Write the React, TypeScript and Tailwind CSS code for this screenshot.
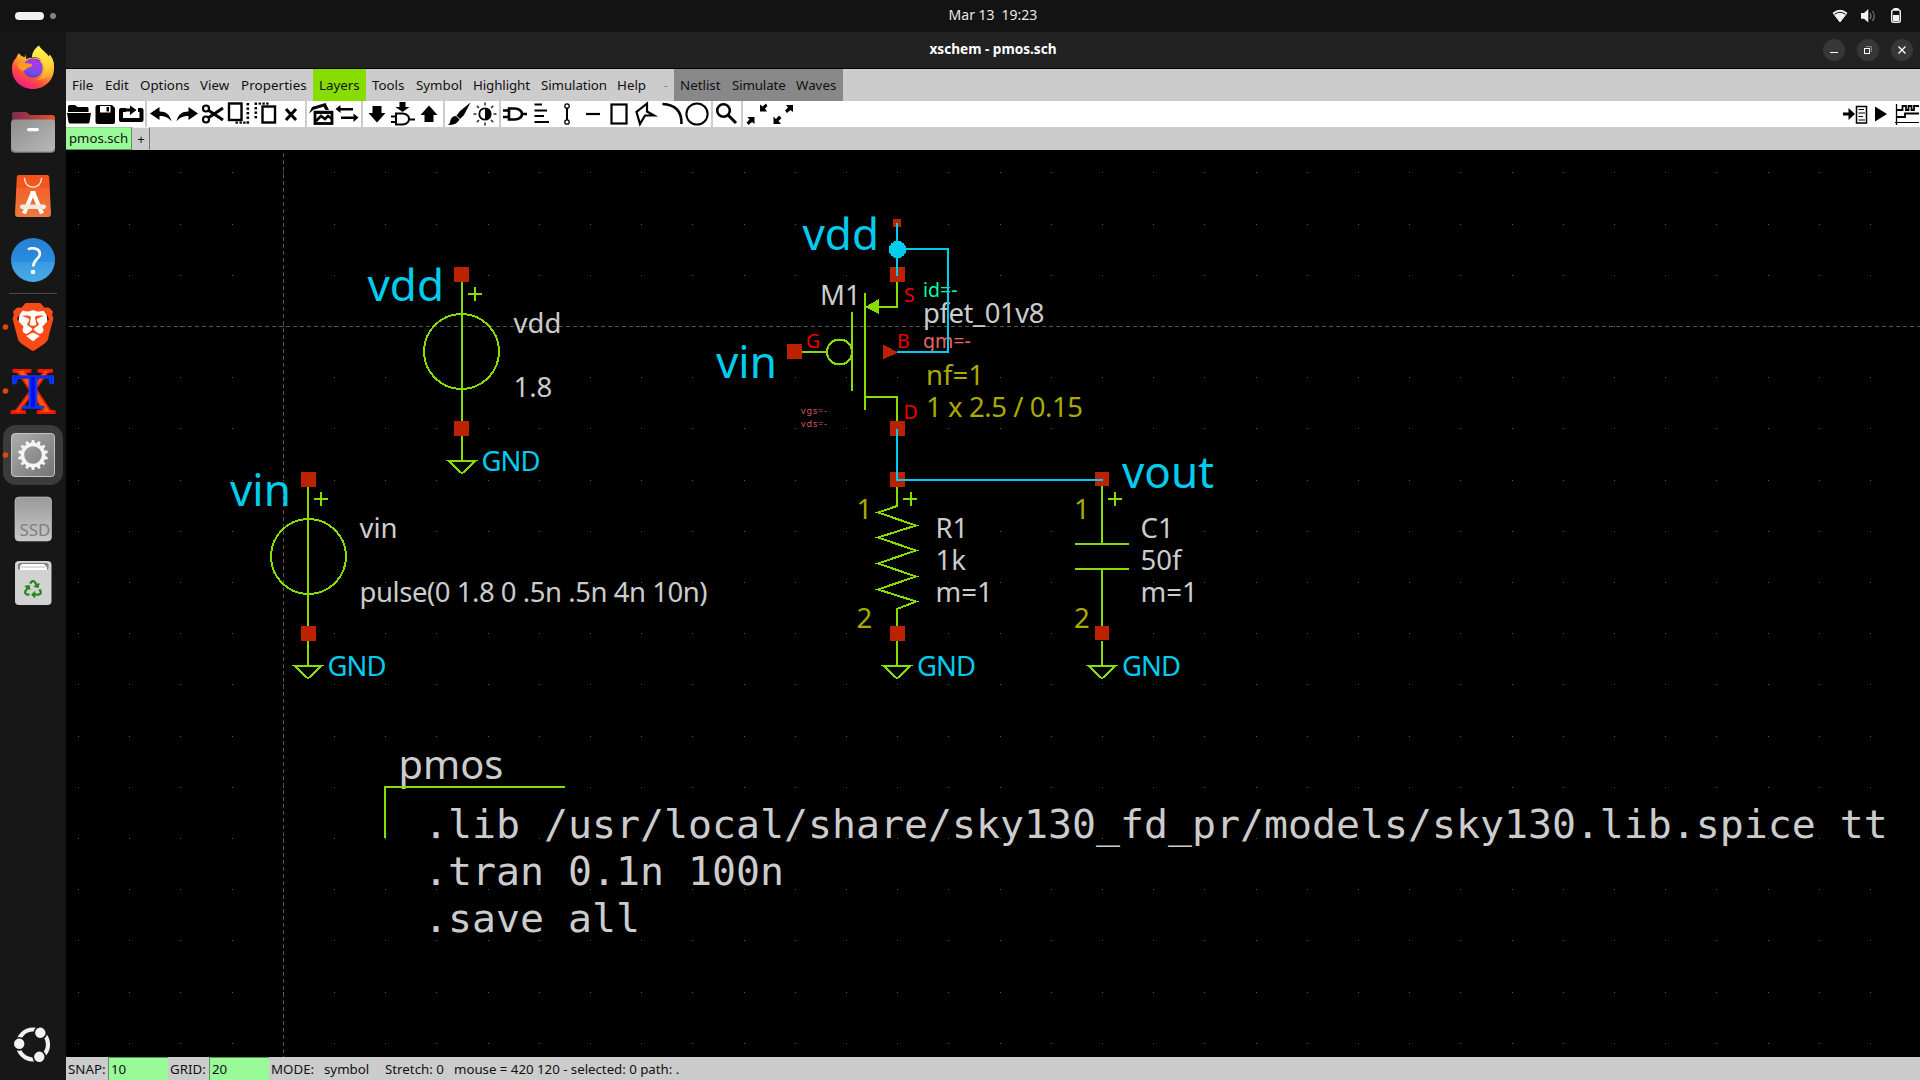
import React from "react";
import { SiBrave } from "react-icons/si";
import { FaRecycle } from "react-icons/fa";

const GREEN = "#88dd00";
const CYAN = "#00ccee";
const RED = "#bb2200";
const GREY = "#cccccc";
const OLIVE = "#aaaa00";

/* ---------- dock ---------- */

function DockIcon({ top, running, children }: { top: number; running?: boolean; children: React.ReactNode }) {
  return (
    <svg width="66" height="64" viewBox={`0 ${top} 66 64`} className="block shrink-0 overflow-visible">
      {children}
      {running && <circle cx="5.5" cy={top + 32} r="2.8" fill="#d9480f" />}
    </svg>
  );
}

function Gear() {
  const teeth = Array.from({ length: 14 }, (_, i) => (i * 360) / 14);
  return (
    <g>
      <circle cx="33" cy="455" r="10.6" fill="none" stroke="#f4f4f2" strokeWidth="3.6" />
      {teeth.map((a) => (
        <path key={a} d="M31 444.6 L31.8 440 H34.2 L35 444.6Z" fill="#f4f4f2" transform={`rotate(${a} 33 455)`} />
      ))}
    </g>
  );
}

function Dock() {
  return (
    <aside className="flex w-[66px] shrink-0 flex-col bg-[#171717] pt-[3px] pb-[3px]">
      <DockIcon top={35}>
        <defs>
          <linearGradient id="ffBody" x1="0.85" y1="0.05" x2="0.2" y2="1">
            <stop offset="0" stopColor="#fff44f" />
            <stop offset="0.35" stopColor="#ffb02a" />
            <stop offset="0.65" stopColor="#ff4f3d" />
            <stop offset="1" stopColor="#f0109a" />
          </linearGradient>
          <radialGradient id="ffCore" cx="0.6" cy="0.2" r="0.9">
            <stop offset="0" stopColor="#b833e1" />
            <stop offset="0.6" stopColor="#7a4be8" />
            <stop offset="1" stopColor="#4a3fc0" />
          </radialGradient>
          <linearGradient id="ffFlame" x1="0.5" y1="0" x2="0.7" y2="1">
            <stop offset="0" stopColor="#fff44f" />
            <stop offset="0.6" stopColor="#ffd43a" />
            <stop offset="1" stopColor="#ff9a28" />
          </linearGradient>
        </defs>
        <path d="M19 53 C20 55 22 57 25 57 L26 54 V59 C31 57 38 57 44 61 L50 55 C53 59 54 64 54 68 C54 80 45 89 33 89 C21 89 12 80 12 69 C12 63 14 60 16.500 57.500 C17 56 18 54 19 53Z" fill="url(#ffBody)" />
        <path d="M39 45.500 C34 49 32 53 32 57.500 C38 56 44 60 44.500 66 C45 73 42 78 37 80 C46 79 54 73 54 66 C54 61 52 57 49.500 54.500 L49.500 58 C48 53 42 51 39 45.500Z" fill="url(#ffFlame)" />
        <circle cx="33" cy="68" r="9.8" fill="url(#ffCore)" />
        <path d="M17.500 65 C20 62 23 62 26 63.500 C29 63 31.500 64 32.500 65 C31 68 27 67 26 69.500 C24 71 23 70 23 71.500 C21 70 18 68 17.500 65Z" fill="#ff9a22" />
        <path d="M34 58.500 C36 60 38 59 41 60.500 L38.500 61 L42 64 C39 61 36 61 34 58.500Z" fill="#7a2be0" />
      </DockIcon>
      <DockIcon top={99}>
        <defs>
          <linearGradient id="fTab" x1="0" x2="1">
            <stop offset="0" stopColor="#7a2a52" />
            <stop offset="1" stopColor="#e4552a" />
          </linearGradient>
          <linearGradient id="fFront" x1="0" y1="0" x2="1" y2="1">
            <stop offset="0" stopColor="#8e8e8e" />
            <stop offset="1" stopColor="#b9b9b9" />
          </linearGradient>
        </defs>
        <path d="M12 124 V114 Q12 112 14 112 H26 L30 115 H52 Q55 115 55 118 V124Z" fill="url(#fTab)" />
        <rect x="11" y="119.500" width="44" height="33" rx="3.500" fill="url(#fFront)" />
        <path d="M11.500 149 Q12 152.200 15 152.200 H51 Q54 152.200 54.500 149" fill="none" stroke="#6e6e6e" strokeWidth="1" />
        <rect x="27" y="128" width="12" height="3.200" rx="1.600" fill="#fff" />
      </DockIcon>
      <DockIcon top={163}>
        <defs>
          <linearGradient id="bag" x1="0" y1="0" x2="0" y2="1">
            <stop offset="0" stopColor="#f4511e" />
            <stop offset="0.3" stopColor="#f2571f" />
            <stop offset="0.32" stopColor="#f3632c" />
            <stop offset="1" stopColor="#ee7840" />
          </linearGradient>
        </defs>
        <path d="M19 175 H47 Q49 175 49.200 177 L51 214 Q51 217 48 217 H18 Q15 217 15 214 L16.800 177 Q17 175 19 175Z" fill="url(#bag)" />
        <path d="M24.500 178.500 C25 190 41 190 41.500 178.500" fill="none" stroke="#f7ece6" strokeWidth="1.400" strokeLinecap="round" />
        <path d="M32.600 193 L24 213.500 M33.400 193 L42 213.500" stroke="#fff" strokeWidth="4.200" />
        <rect x="30.500" y="191" width="5" height="5" fill="#fff" />
        <rect x="20" y="204.500" width="26" height="4.500" rx="2" fill="#f9e6dd" />
      </DockIcon>
      <DockIcon top={227}>
        <defs>
          <linearGradient id="help" x1="0" y1="0" x2="0" y2="1">
            <stop offset="0" stopColor="#2580d6" />
            <stop offset="0.54" stopColor="#2b8cdd" />
            <stop offset="0.55" stopColor="#3a9ae3" />
            <stop offset="1" stopColor="#4bace8" />
          </linearGradient>
        </defs>
        <circle cx="33" cy="260" r="22" fill="url(#help)" />
        <path d="M28 249.500 C31 247.500 40.500 247.500 39.800 254.500 C39.300 259 33.300 259.500 33.200 266.500" fill="none" stroke="#fff" strokeWidth="2.600" />
        <circle cx="33" cy="272" r="2.300" fill="#fff" />
      </DockIcon>
      <div className="flex h-1 items-center justify-center">
        <div className="h-px w-12 bg-[#4a4a4a]" />
      </div>
      <DockIcon top={295} running>
        <path d="M20 310 H46 L48 326 L43 343 L33 348 L23 343 L18 326Z" fill="#fff" />
        <svg x="9" y="303" width="48" height="48" viewBox="0 0 24 24">
          <SiBrave size={24} color="#fb4a16" />
        </svg>
      </DockIcon>
      <DockIcon top={359} running>
        <text x="33" y="412.500" textAnchor="middle" fontSize="65" textLength="46" lengthAdjust="spacingAndGlyphs" fill="#ff5a00" stroke="#f01800" strokeWidth="1.800" className="font-['Liberation_Serif',serif]">X</text>
        <text x="33" y="407.500" textAnchor="middle" fontSize="49" textLength="42" lengthAdjust="spacingAndGlyphs" fill="#0a0af0" stroke="#0a3cf0" strokeWidth="1.600" className="font-['Liberation_Serif',serif]">T</text>
      </DockIcon>
      <DockIcon top={423}>
        <defs>
          <linearGradient id="gearTile" x1="0" y1="0" x2="1" y2="1">
            <stop offset="0" stopColor="#adadad" />
            <stop offset="1" stopColor="#747474" />
          </linearGradient>
        </defs>
        <rect x="3" y="425" width="60" height="60" rx="13" fill="#3b3b3b" />
        <rect x="11.500" y="433.500" width="43" height="43" rx="3.500" fill="url(#gearTile)" stroke="#c4c4c4" />
        <Gear />
        <circle cx="5.500" cy="455" r="2.800" fill="#d9480f" />
      </DockIcon>
      <DockIcon top={487}>
        <defs>
          <linearGradient id="ssd" x1="0" y1="0" x2="0" y2="1">
            <stop offset="0" stopColor="#9a9a9a" />
            <stop offset="1" stopColor="#c9c9c9" />
          </linearGradient>
        </defs>
        <rect x="15" y="497" width="36.500" height="44" rx="4" fill="url(#ssd)" stroke="#cfcfcf" strokeWidth="0.600" />
        <text x="19.500" y="536" fontSize="15.500" textLength="31" lengthAdjust="spacingAndGlyphs" fill="#808080" className="font-['Noto_Sans',sans-serif]">SSD</text>
      </DockIcon>
      <DockIcon top={551}>
        <rect x="15" y="561" width="36.500" height="44" rx="4" fill="#d2d2d2" />
        <rect x="18" y="563" width="30.500" height="7" rx="2.500" fill="#7d7d7d" />
        <path d="M20 570 V566 L22 564 H44 L47 567 V570Z" fill="#fff" />
        <path d="M21 567 H46" stroke="#aaa" strokeWidth="0.800" />
        <svg x="24" y="580" width="18" height="18" viewBox="0 0 18 18">
          <FaRecycle size={18} color="#25881c" />
        </svg>
      </DockIcon>
      <div className="flex-1" />
      <DockIcon top={1013}>
        <circle cx="33" cy="1044.500" r="15" fill="none" stroke="#f2f2f2" strokeWidth="4.200" />
        {[-58, 63, 183].map((a) => (
          <g key={a} transform={`rotate(${a} 33 1044.5)`}>
            <circle cx="46.800" cy="1044.500" r="6.900" fill="#171717" />
            <circle cx="46.800" cy="1044.500" r="5.200" fill="#f2f2f2" />
          </g>
        ))}
      </DockIcon>
    </aside>
  );
}

/* ---------- top bars ---------- */

function TopBar() {
  return (
    <div className="flex h-8 items-center justify-between bg-[#131313] text-[#e8e8e8]">
      <div className="flex w-40 items-center gap-1.5 pl-[15px]">
        <div className="h-2 w-[29px] rounded-full bg-[#f2f2f2]" />
        <div className="h-1.5 w-1.5 rounded-full bg-[#858585]" />
      </div>
      <div className="flex gap-[7px] pb-[3px] pl-[66px] text-[14px]">
        <span>Mar 13</span>
        <span>19:23</span>
      </div>
      <svg width="160" height="32" viewBox="1760 0 160 32">
        <path d="M1833 13 Q1840 7.500 1847 13 L1840 22Z" fill="#f2f2f2" stroke="#f2f2f2" strokeWidth="1" strokeLinejoin="round" />
        <path d="M1834.500 14.300 Q1840 10.300 1845.500 14.300" fill="none" stroke="#131313" strokeWidth="1" />
        <path d="M1861 13 H1864 L1868.300 9 V22.500 L1864 18.800 H1861Z" fill="#f2f2f2" />
        <path d="M1870 13 Q1872 16 1870 19 M1872.500 11 Q1876 16 1872.500 21" fill="none" stroke="#777" strokeWidth="1.200" />
        <rect x="1893.500" y="8" width="5" height="2" fill="#f2f2f2" />
        <rect x="1891.700" y="10" width="8.600" height="12.300" rx="1.800" fill="none" stroke="#f2f2f2" strokeWidth="1.400" />
        <rect x="1893" y="15" width="6" height="6" fill="#f2f2f2" />
      </svg>
    </div>
  );
}

function TitleBar() {
  return (
    <div className="flex h-[37px] items-center border-b border-black bg-[#222222]">
      <div className="w-32" />
      <div className="flex-1 pb-px text-center text-[13.6px] font-bold text-white">xschem - pmos.sch</div>
      <svg width="128" height="36" viewBox="1792 32 128 36">
        {[1834, 1868, 1902].map((x) => (
          <circle key={x} cx={x} cy="50" r="11" fill="#373737" />
        ))}
        <rect x="1830" y="52" width="8" height="1" fill="#fff" />
        <rect x="1864.500" y="48.500" width="5" height="5" fill="none" stroke="#fff" />
        <path d="M1866 46.500 H1871.500 V52" fill="none" stroke="#888" />
        <path d="M1898.500 46.500 L1905.500 53.500 M1905.500 46.500 L1898.500 53.500" stroke="#fff" strokeWidth="1.300" />
      </svg>
    </div>
  );
}

function Menu({ w, label, tone }: { w: string; label: string; tone?: string }) {
  return <div className={`flex h-full shrink-0 items-center pt-0.5 pl-1.5 whitespace-pre ${w} ${tone ?? ""}`}>{label}</div>;
}

function MenuBar() {
  return (
    <div className="flex h-8 bg-[#cccccc] text-[13.33px] text-[#111]">
      <Menu w="w-[33px]" label="File" />
      <Menu w="w-[35px]" label="Edit" />
      <Menu w="w-[60px]" label="Options" />
      <Menu w="w-[41px]" label="View" />
      <Menu w="w-[78px]" label="Properties" tone="tracking-[0.1px]" />
      <Menu w="w-[53px]" label="Layers" tone="bg-[#88dd00]" />
      <Menu w="w-[44px]" label="Tools" />
      <Menu w="w-[57px]" label="Symbol" />
      <Menu w="w-[68px]" label="Highlight" tone="tracking-[-0.1px]" />
      <Menu w="w-[76px]" label="Simulation" tone="tracking-[-0.1px]" />
      <Menu w="w-[43px]" label="Help" />
      <Menu w="w-[20px]" label=" -" tone="text-[#888]" />
      <Menu w="w-[52px]" label="Netlist" tone="bg-[#888888]" />
      <Menu w="w-[64px]" label="Simulate" tone="bg-[#888888] tracking-[-0.15px]" />
      <Menu w="w-[53px]" label="Waves" tone="bg-[#888888]" />
    </div>
  );
}

/* Toolbar icons share one coordinate system; each group shows its own slice. */
function Group({ x, w, children }: { x: number; w: number; children: React.ReactNode }) {
  return (
    <svg width={w} height="26" viewBox={`${x} 101 ${w} 26`} className="block shrink-0 bg-white" fill="none" stroke="#000" strokeWidth="2">
      {children}
    </svg>
  );
}

function Sep() {
  return <div className="h-full w-0.5 shrink-0 bg-[#cccccc]" />;
}

function ToolBar() {
  const rays = [0, 45, 90, 135, 180, 225, 270, 315];
  return (
    <div className="flex h-[26px] bg-white">
      <Group x={66} w={79}>
        <path d="M68 112 V106.500 Q68 105 69.500 105 H75 L77.500 107 H87 Q88.500 107 88.500 108.500 V112Z M67 113 H91 L89.500 122 Q89.300 123.500 88 123.500 H70 Q68.700 123.500 68.500 122Z" fill="#000" stroke="none" />
        <path d="M97.500 105 H112 L115 108 V122 Q115 124 113 124 H97.500 Q95.500 124 95.500 122 V107 Q95.500 105 97.500 105Z" fill="#000" stroke="none" />
        <path d="M100 106 H110.500 V112.500 H100Z" fill="#fff" stroke="none" />
        <path d="M106.500 107 H109 V111.500 H106.500Z" fill="#000" stroke="none" />
        <path d="M126 110 H121 V120 H141.500 V110 H138" strokeWidth="4" strokeLinejoin="round" />
        <path d="M124.500 108.500 H130 V105.500 L136.500 110 L130 115 V111.500 H124.500Z" fill="#000" stroke="none" />
      </Group>
      <Sep />
      <Group x={147} w={158}>
        <g fill="#000" stroke="none">
          <path d="M150 113.500 L159.500 107 V111.500 C166 111.500 170 114.500 171.500 121.500 C168.500 117.500 165 116 159.500 116 V120Z" />
          <path d="M198 113.500 L188.500 107 V111.500 C182 111.500 178 114.500 176.500 121.500 C179.500 117.500 183 116 188.500 116 V120Z" />
        </g>
        <circle cx="206" cy="108.500" r="3" strokeWidth="2.200" />
        <circle cx="206" cy="119.500" r="3" strokeWidth="2.200" />
        <path d="M208 110 L223 120 M208 118 L223 108" strokeWidth="3" />
        <rect x="229" y="103.500" width="12.500" height="16.500" strokeWidth="2.400" />
        <g fill="#000" stroke="none">
          {[102.5, 107, 111.5, 116, 120.8].map((y) => (
            <rect key={y} x="246.500" y={y + 0.5} width="2.600" height="2.400" />
          ))}
          {[235.5, 239.5, 243.2].map((x) => (
            <rect key={x} x={x} y="121.500" width="2.400" height="2.200" />
          ))}
          {[102.5, 107, 111.5, 116].map((y) => (
            <rect key={y} x="254.500" y={y} width="2.600" height="2.400" />
          ))}
          {[258.6, 262.4, 266.2].map((x) => (
            <rect key={x} x={x} y="102.500" width="2.400" height="2.200" />
          ))}
        </g>
        <rect x="262.500" y="106.500" width="12.500" height="16" strokeWidth="2.400" />
        <path d="M286 109 L296 120 M296 109 L286 120" strokeWidth="3" />
      </Group>
      <Sep />
      <Group x={307} w={54}>
        <rect x="315" y="112.500" width="17" height="11" strokeWidth="2.800" />
        <path d="M309 113.500 L312 107 L325.500 103 L329 110 L325.500 110 L323.500 106.800 L313.500 109.800Z" fill="#000" stroke="none" />
        <path d="M314 112 H333 M316 121 L321 116 L325 119 L328 116 L332 119" strokeWidth="2.600" />
        <path d="M335.500 109 L340.500 105 V108 H353 V110.500 H340.500 V113Z M358.500 117.500 L353.500 113.500 V116.500 H341 V119 H353.500 V122Z" fill="#000" stroke="none" />
      </Group>
      <Sep />
      <Group x={363} w={80}>
        <g fill="#000" stroke="none">
          <path d="M372.500 106 H381.500 V113 H385.500 L377 122.500 L368.500 113 H372.500Z" />
          <path d="M399.500 102 H405.500 V107 H409.500 L402.500 112 L395.500 107 H399.500Z" />
          <path d="M424.500 122 H433.500 V115 H437.500 L429 105.500 L420.500 115 H424.500Z" />
        </g>
        <path d="M396 113.500 H403 Q409 114.500 409 119 Q409 123.500 403 124.500 H396Z M391 116.500 H396 M391 122 H396 M409 119.500 H415" />
      </Group>
      <Sep />
      <Group x={445} w={54}>
        <path d="M470.500 102.500 L464 115 L460 119 L456.500 115.500 L460 111Z" fill="#000" stroke="none" />
        <path d="M456 116 L459.500 119.500 Q457 125 448 125 Q450.500 123 450.500 120 Q452 116 456 116Z" fill="#000" stroke="none" />
        <circle cx="485" cy="114" r="5.700" strokeWidth="1.800" />
        <path d="M485 108.500 A5.500 5.500 0 0 1 485 119.500Z" fill="#000" stroke="none" />
        {rays.map((a) => (
          <path key={a} d="M485 105.500 V102.500" strokeWidth="1.600" stroke="#333" transform={`rotate(${a} 485 114)`} />
        ))}
      </Group>
      <Sep />
      <Group x={501} w={210}>
        <path d="M509 108.500 H515 Q522 109.500 522 114 Q522 118.500 515 119.500 H509Z M503 110.500 H509 M503 117 H509 M522 114 H527" strokeWidth="2.600" />
        <path d="M534.500 104.500 H542 M534.500 110.500 H547 M534.500 116 H544 M534.500 122 H549" strokeWidth="2.200" />
        <circle cx="567" cy="106" r="2.200" strokeWidth="1.300" />
        <circle cx="567" cy="122" r="2.200" strokeWidth="1.300" />
        <path d="M567 108 V120" />
        <path d="M586 114 H600" strokeWidth="2.200" />
        <rect x="611.500" y="104.500" width="15" height="19" strokeWidth="2.200" />
        <path d="M647 103.500 L636.500 112 L640 124 L645 115.500 L654 115.500 L647 111.500Z" strokeWidth="2.200" />
        <path d="M662.500 104 Q682 105 681.500 124" strokeWidth="2.600" />
        <circle cx="697" cy="114" r="10.600" strokeWidth="2" />
      </Group>
      <Sep />
      <Group x={713} w={28}>
        <circle cx="723.500" cy="110.500" r="6.300" strokeWidth="2.600" />
        <path d="M728 115 L736 123" strokeWidth="3" />
      </Group>
      <Sep />
      <Group x={743} w={60}>
        <g fill="#000" stroke="none">
          <path d="M754.500 117 V124 L752 122 L748.500 125 L746.500 122.500 L749.500 119.500 L747.500 117Z" />
          <path d="M760 111.500 V104.500 L762.500 106.500 L766 103.500 L767.500 106 L765 108.500 L767 111.500Z" />
          <path d="M773.500 124 V116.500 L776 119 L779 115.500 L781.500 118 L778.500 121 L781 124Z" />
          <path d="M793 105 V112 L790.500 110 L787 113 L785 110.500 L788 107.500 L786 105Z" />
        </g>
      </Group>
      <div className="flex-1" />
      <Group x={1840} w={80}>
        <path d="M1843 112.500 H1848.500 V108 L1855 114 L1848.500 120 V115.500 H1843Z" fill="#000" stroke="none" />
        <path d="M1856.500 106.500 H1866.500 V123 H1856.500Z" strokeWidth="1.500" />
        <path d="M1858.500 109.500 H1864 M1858.500 113 H1865 M1858.500 116.500 H1863 M1858.500 120 H1865" strokeWidth="1.200" />
        <path d="M1875 106.500 L1887 114 L1875 121.500Z" fill="#000" stroke="none" />
        <path d="M1896.500 104 V125" strokeWidth="1.300" />
        <path d="M1895 122.500 H1919" strokeWidth="1" />
        <path d="M1897 110 H1902.500 V106 H1906 V110 H1908.500 V106 H1911.500 V110 H1914 V106 H1919" strokeWidth="1.800" />
        <path d="M1896 117 H1905 V113.500 H1919" strokeWidth="1.800" />
      </Group>
    </div>
  );
}

function TabRow() {
  return (
    <div className="flex h-[23px] bg-[#cccccc] text-[13.2px] text-[#111]">
      <div className="flex w-[66px] items-center border-t border-r border-b border-t-[#88dd88] border-r-[#559955] border-b-[#559955] bg-[#98fb98] pl-[3px]">pmos.sch</div>
      <div className="ml-px flex w-[17px] items-center justify-center border-t border-r-1 border-t-[#eee] border-r-[#777] pt-0.5">+</div>
    </div>
  );
}

/* ---------- schematic ---------- */

function Pin({ x, y, s = 15 }: { x: number; y: number; s?: number }) {
  return <rect x={x} y={y} width={s} height={s} fill={RED} />;
}

function T({ x, y, size, w, fill, children }: { x: number; y: number; size: number; w?: number; fill: string; children: string }) {
  return (
    <text x={x} y={y} fontSize={size} textLength={w} fill={fill} xmlSpace="preserve" className="font-['Noto_Sans',sans-serif]">
      {children}
    </text>
  );
}

function Ground({ x, y, label }: { x: number; y: number; label: number }) {
  return (
    <g>
      <path d={`M${x} ${y + 8} V${y + 32} M${x - 13.5} ${y + 33} H${x + 13.5} L${x} ${y + 45.5} Z`} fill="none" stroke={GREEN} strokeWidth="2" />
      <T x={label} y={y + 43} size={27.5} w={59} fill={CYAN}>GND</T>
    </g>
  );
}

function Plus({ x, y }: { x: number; y: number }) {
  return <path d={`M${x - 7} ${y} H${x + 7} M${x + 0.5} ${y - 7} V${y + 7}`} stroke={GREEN} strokeWidth="2" />;
}

interface SourceProps {
  x: number;
  y: number;
  cx: number;
  pinX: number;
  name: string;
  value: string;
  valueW?: number;
  net: string;
  netX: number;
}

function Source({ x, y, cx, pinX, name, value, valueW, net, netX }: SourceProps) {
  return (
    <g>
      <path d={`M${x} ${y + 8} V${y + 154}`} stroke={GREEN} strokeWidth="2" />
      <circle cx={cx} cy={y + 77.5} r="37.5" fill="none" stroke={GREEN} strokeWidth="2" />
      <Plus x={x + 12.5} y={y + 20} />
      <Pin x={pinX} y={y - 7} />
      <Pin x={pinX} y={y + 147} />
      <Ground x={x} y={y + 154} label={x + 19.5} />
      <T x={netX} y={y + 27} size={44} fill={CYAN}>{net}</T>
      <T x={x + 51.5} y={y + 59} size={27.5} fill={GREY}>{name}</T>
      <T x={x + 51.5} y={y + 123} size={27.5} w={valueW} fill={GREY}>{value}</T>
    </g>
  );
}

function GridDots() {
  const rows = Array.from({ length: 18 }, (_, j) => Math.round(172.49 + 51.2 * j));
  const cols = Array.from({ length: 36 }, (_, i) => Math.floor(78.4 + 51.2 * i));
  return (
    <g fill="#5c5c5c">
      {rows.map((y) => cols.map((x) => <rect key={`${x}-${y}`} x={x} y={y} width="1" height="1" />))}
    </g>
  );
}

function Schematic() {
  return (
    <div className="h-[907px] overflow-hidden bg-black">
      <svg width="1854" height="907" viewBox="66 150 1854 907" className="block" shapeRendering="crispEdges">
        <GridDots />
        <path d="M69 326.500 H1920 M283.500 153 V1057" stroke="#555" strokeWidth="1" strokeDasharray="4 3" fill="none" />

        <Source x={462} y={274} cx={461.5} pinX={454} name="vdd" value="1.8" net="vdd" netX={367.5} />
        <Source x={308} y={479} cx={308.5} pinX={301} name="vin" value="pulse(0 1.8 0 .5n .5n 4n 10n)" valueW={348} net="vin" netX={230} />

        {/* PMOS transistor */}
        <Pin x={893} y={219} s={8} />
        <Pin x={890} y={267} />
        <Pin x={787} y={344} />
        <Pin x={890} y={421} />
        <path d="M897 282 V307 H867 M865 293 V410 M852 312 V391 M802 352 H827 M865 397 H897 V421" fill="none" stroke={GREEN} strokeWidth="2" />
        <path d="M865 307 L879 299 V314Z" fill={GREEN} />
        <circle cx="839.5" cy="352" r="12.5" fill="none" stroke={GREEN} strokeWidth="2" />
        <path d="M883 344.500 L898 352.500 L883 359.500Z" fill={RED} />
        <T x={802.5} y={250} size={44} fill={CYAN}>vdd</T>
        <T x={716} y={378} size={44} fill={CYAN}>vin</T>
        <T x={820} y={304.5} size={27.5} fill={GREY}>M1</T>
        <T x={806} y={348} size={19.5} fill="#ee0000">G</T>
        <T x={904} y={302} size={19.5} fill="#ee0000">S</T>
        <T x={897} y={348} size={19.5} fill="#ee0000">B</T>
        <T x={903.5} y={418.5} size={19.5} fill="#ee0000">D</T>
        <T x={923} y={297} size={19.5} fill="#00ffaa">id=-</T>
        <T x={923} y={322.5} size={27.5} w={121.5} fill={GREY}>pfet_01v8</T>
        <T x={923} y={348} size={19.5} fill="#ee6666">gm=-</T>
        <T x={926} y={384.5} size={27.5} fill={OLIVE}>nf=1</T>
        <T x={926} y={416.5} size={27.5} w={157} fill={OLIVE}>1 x 2.5 / 0.15</T>
        <T x={801} y={413.5} size={9} w={26} fill="#cc5f5f">vgs=-</T>
        <T x={801} y={426.5} size={9} w={26} fill="#cc5f5f">vds=-</T>

        {/* resistor */}
        <Pin x={890} y={472} />
        <path d="M897 487 V506 L878 512.500 L916 525.500 L878 537.500 L916 550.500 L878 563.500 L916 576.500 L878 589.500 L916 601.500 L897 609 V626" fill="none" stroke={GREEN} strokeWidth="2" />
        <Plus x={910} y={499} />
        <Pin x={890} y={626} />
        <Ground x={897} y={633} label={917} />
        <T x={856.5} y={518.5} size={27.5} fill={OLIVE}>1</T>
        <T x={856.5} y={628} size={27.5} fill={OLIVE}>2</T>
        <T x={935.5} y={538} size={27.5} fill={GREY}>R1</T>
        <T x={935.5} y={570} size={27.5} fill={GREY}>1k</T>
        <T x={935.5} y={602} size={27.5} fill={GREY}>m=1</T>

        {/* capacitor */}
        <Pin x={1095} y={472} s={14} />
        <path d="M1102 486 V544 M1075 544 H1129 M1075 569 H1129 M1102 569 V626" fill="none" stroke={GREEN} strokeWidth="2" />
        <Plus x={1114.5} y={499} />
        <Pin x={1095} y={626} s={14} />
        <Ground x={1102} y={633} label={1122} />
        <T x={1074} y={518.5} size={27.5} fill={OLIVE}>1</T>
        <T x={1074} y={628} size={27.5} fill={OLIVE}>2</T>
        <T x={1140.5} y={538} size={27.5} fill={GREY}>C1</T>
        <T x={1140.5} y={570} size={27.5} fill={GREY}>50f</T>
        <T x={1140.5} y={602} size={27.5} fill={GREY}>m=1</T>
        <T x={1122} y={487.5} size={44} fill={CYAN}>vout</T>

        {/* wires */}
        <path d="M897 223 V276 M897 249 H948 V352 H897 M897 429 V480 H1103" fill="none" stroke={CYAN} strokeWidth="2" />
        <circle cx="897.5" cy="249.5" r="8.700" fill={CYAN} />

        {/* simulation block */}
        <T x={398.5} y={779} size={39.8} fill={GREY}>pmos</T>
        <path d="M385 838 V787 H565" fill="none" stroke={GREEN} strokeWidth="2" />
        <g fontSize="39.86" fill={GREY} className="font-['DejaVu_Sans_Mono',monospace]">
          <text x="424" y="837.500">.lib /usr/local/share/sky130_fd_pr/models/sky130.lib.spice tt</text>
          <text x="424" y="884.500">.tran 0.1n 100n</text>
          <text x="424" y="931.500">.save all</text>
        </g>
      </svg>
    </div>
  );
}

function StatusBar() {
  return (
    <div className="flex h-[23px] items-center bg-[#cccccc] pl-0.5 text-[13.3px] whitespace-pre text-[#111]">
      <span className="w-10 pt-0.5">SNAP:</span>
      <span className="flex h-full w-[60px] items-center border-t border-l border-[#559955] bg-[#98fb98] pt-px pl-0.5">10</span>
      <span className="w-[41px] pt-0.5 pl-0.5">GRID:</span>
      <span className="flex h-full w-[60px] items-center border-t border-l border-[#559955] bg-[#98fb98] pt-px pl-0.5">20</span>
      <span className="w-[55px] pt-0.5 pl-0.5">MODE:</span>
      <span className="w-[61px] pt-0.5">symbol</span>
      <span className="w-[69px] pt-0.5">Stretch: 0</span>
      <span className="pt-0.5 tracking-[-0.03px]">mouse = 420 120 - selected: 0 path: .</span>
    </div>
  );
}

export default function App() {
  return (
    <div className="flex h-[1080px] w-[1920px] flex-col overflow-hidden bg-black font-['Noto_Sans',sans-serif]">
      <TopBar />
      <div className="flex h-[1048px]">
        <Dock />
        <main className="flex w-[1854px] flex-col">
          <TitleBar />
          <MenuBar />
          <ToolBar />
          <TabRow />
          <Schematic />
          <StatusBar />
        </main>
      </div>
    </div>
  );
}
